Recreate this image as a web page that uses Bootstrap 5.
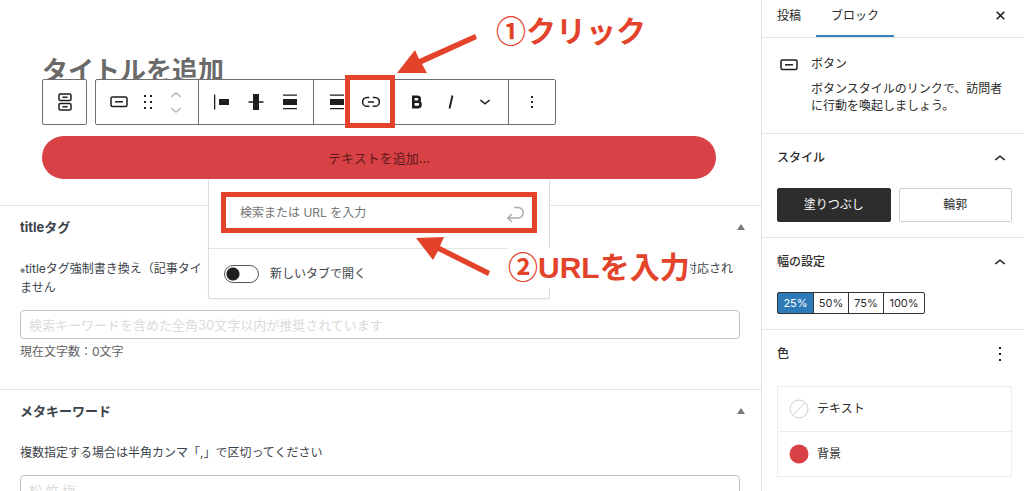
<!DOCTYPE html>
<html lang="ja">
<head>
<meta charset="utf-8">
<meta name="viewport" content="width=device-width, initial-scale=1">
<title>ボタンブロックの編集</title>
<link href="https://cdn.jsdelivr.net/npm/bootstrap@5.3.0/dist/css/bootstrap.min.css" rel="stylesheet">
<style>
  :root { --ink: #1e1e1e; --mark: #e4432b; --brand: #d84145; --line: #e4e4e4; }
  body { font-family: Inter, "Noto Sans CJK JP", sans-serif; font-size: 12px; line-height: 18px; color: #3c434a; background: #fff; }
  button { color: inherit; }
  .editor-shell { height: 100vh; }
  .settings { width: 263px; border-left: 1px solid var(--line); color: #2c2c2c; }
  .canvas { padding: 55px 45px 26px 42px; }
  .post-title { font-size: 26px; line-height: 32px; font-weight: 700; color: #6a6a6a; margin-bottom: 49px; }
  .block-toolbar { top: 79px; left: 42px; gap: 8px; z-index: 3; color: var(--ink); }
  .tool-box { height: 46px; border: 1px solid #6f6f6f; border-radius: 2px; background: #fff; }
  .tool-parent { width: 45px; }
  .tool-group { padding: 0 6px; }
  .tool-group + .tool-group { border-left: 1px solid #6f6f6f; }
  .tool { width: 34px; height: 44px; padding: 0; border: 0; background: none; display: flex; align-items: center; justify-content: center; }
  .tool-drag { width: 24px; }
  .tool-move { width: 32px; }
  .tool svg, .settings svg { display: block; }
  .tool-marked { position: relative; z-index: 2; }
  .tool-marked::after { content: ""; position: absolute; inset: -5px -7px -4px -9px; border: 5px solid var(--mark); }
  .cta { height: 43px; border: 0; border-radius: 22px; background: var(--brand); color: #5d1a1c; font-size: 13px; }
  .link-popover { top: 179px; left: 208px; width: 342px; z-index: 2; background: #fff; border: 1px solid #dcdcdc; border-top: 0; border-radius: 2px; box-shadow: 0 1px 2px #0000000d; }
  .link-search { margin: 13px 12px 15px; height: 41px; border: 5px solid var(--mark); }
  .link-search input { border: 0; outline: 0; padding: 0 14px; color: #555; background: none; }
  .link-search input::placeholder { color: #757575; opacity: 1; }
  .link-option { height: 50px; padding: 0 15px; gap: 11px; border-top: 1px solid var(--line); }
  .switch { appearance: none; width: 35px; height: 18px; margin: 0; border: 1px solid #555; border-radius: 9px; background: radial-gradient(circle at 8px 8px, #1e1e1e 6px, transparent 7px); }
  .meta-panel { border-top: 1px solid var(--line); padding: 0 21px 0 20px; }
  .meta-head { height: 42px; }
  .meta-head h2 { font-size: 13px; line-height: 18px; font-weight: 700; margin: 0; }
  .meta-note { margin: 12px 0 13px; }
  .note-line { padding-right: 7px; }
  .note-mark { font-size: 8px; }
  .meta-toggle { border: 0; background: none; padding: 0; margin-right: -5px; }
  .meta-input { display: block; width: 100%; height: 29px; border: 1px solid #bfc1c4; border-radius: 4px; padding: 0 8px; font-size: 13px; }
  .meta-input::placeholder { color: #dadada; opacity: 1; }
  .meta-count { margin: 4px 0 28px; color: #606060; }
  .callout { font-family: "Liberation Sans", "Noto Sans CJK JP", sans-serif; font-size: 30px; line-height: 40px; font-weight: 700; color: var(--mark); background: #fff; z-index: 4; white-space: nowrap; }
  .callout-click { top: 12px; left: 496px; }
  .callout-url { top: 248px; left: 508px; }
  .pointer { z-index: 5; }
  .pointer-click { top: 30px; left: 390px; }
  .pointer-url { top: 230px; left: 410px; }
  .side-tabs { height: 38px; border-bottom: 1px solid var(--line); }
  .side-tab { border: 0; background: none; height: 37px; padding: 0 15px 4px; border-bottom: 2px solid transparent; }
  .side-tab.active { border-color: #3a80b5; }
  .side-close { border: 0; background: none; padding: 0 19px 7px 0; }
  .side-panel { padding: 15px 12px 15px 15px; border-bottom: 1px solid var(--line); }
  .side-head { height: 18px; margin-bottom: 21px; padding-right: 6px; }
  .side-head h3 { font-size: 12px; line-height: 18px; margin: 0; }
  .icon-button { border: 0; background: none; padding: 0; }
  .block-card { gap: 13px; padding: 17px 15px 19px 18px; border-bottom: 1px solid var(--line); }
  .block-card p { margin: 7px 0 0; line-height: 17px; }
  .style-choice { height: 34px; padding: 0; border: 1px solid #cfcfcf; border-radius: 2px; background: #fff; }
  .style-choice.active { background: #2d2d2d; border-color: #2d2d2d; color: #fff; }
  .width-choice { height: 22px; width: 36px; padding: 0; font-size: 11px; line-height: 16px; border: 1px solid #333; margin-left: -1px; background: #fff; }
  .width-choice:first-child { margin-left: 0; width: 37px; border-radius: 2px 0 0 2px; background: #2c7ab8; color: #fff; }
  .width-choice:last-child { width: 42px; border-radius: 0 2px 2px 0; }
  .color-list { border: 1px solid #ececec; margin-top: 23px; }
  .color-row { height: 44px; padding: 0 11px; gap: 8px; border: 0; background: none; width: 100%; }
  .color-row + .color-row { height: 45px; border-top: 1px solid #ececec; }
</style>
</head>
<body>
<div class="editor-shell d-flex overflow-hidden">
  <main class="flex-grow-1 position-relative overflow-hidden">
    <section class="canvas">
      <h1 class="post-title">タイトルを追加</h1>
      <button class="cta w-100" type="button">テキストを追加...</button>
    </section>

    <div class="block-toolbar position-absolute d-flex" role="toolbar" aria-label="ブロックツール">
      <div class="tool-box tool-parent d-flex justify-content-center"><button class="tool" type="button" aria-label="ボタングループ"><svg width="16" height="20" viewBox="0 0 16 20" fill="none" stroke="currentColor" stroke-width="1.5"><rect x="2" y="2" width="12" height="6.5" rx="1.3"/><rect x="2" y="11.5" width="12" height="6.5" rx="1.3"/><path d="M5.5 5.2h5M5.5 14.8h5"/></svg></button></div>
      <div class="tool-box d-flex">
        <div class="tool-group d-flex">
          <button class="tool" type="button" aria-label="ボタン"><svg width="18" height="12" fill="none" stroke="currentColor" stroke-width="1.5"><rect x="1" y="1" width="16" height="9.5" rx="1.5"/><path d="M5 5.8h8"/></svg></button>
          <button class="tool tool-drag" type="button" aria-label="ドラッグ"><svg width="10" height="16" fill="currentColor"><path d="M1 1h2v2H1zM7 1h2v2H7zM1 7h2v2H1zM7 7h2v2H7zM1 13h2v2H1zM7 13h2v2H7z"/></svg></button>
          <button class="tool tool-move" type="button" aria-label="移動"><svg width="12" height="22" fill="none" stroke="#b5b5b5" stroke-width="1.4"><path d="M1 6l5-4 5 4M1 17l5 4 5-4"/></svg></button>
        </div>
        <div class="tool-group d-flex">
          <button class="tool" type="button" aria-label="左寄せ"><svg width="16" height="16" fill="currentColor"><path d="M0 .5h1.3v15H0zM5 5h10v6H5z"/></svg></button>
          <button class="tool" type="button" aria-label="中央寄せ"><svg width="16" height="16" fill="currentColor"><path d="M5 0h6v16H5zM.5 7.3h15v1.4H.5z"/></svg></button>
          <button class="tool" type="button" aria-label="幅を揃える"><svg width="14" height="16" fill="currentColor"><path d="M0 .5h14v1.3H0zM0 5h14v6H0zM0 14h14v1.3H0z"/></svg></button>
        </div>
        <div class="tool-group d-flex">
          <button class="tool" type="button" aria-label="配置"><svg width="14" height="16" fill="currentColor"><path d="M0 .5h14v1.3H0zM0 5h14v6H0zM0 14h14v1.3H0z"/></svg></button>
          <button class="tool tool-marked me-2" type="button" aria-label="リンク"><svg width="18" height="12" fill="none" stroke="currentColor" stroke-width="1.5"><path d="M7.3 1.5H5a4.4 4.4 0 0 0 0 8.8h2.3M10.7 1.5H13a4.4 4.4 0 0 1 0 8.8h-2.3M6 5.9h6"/></svg></button>
          <button class="tool ms-1" type="button" aria-label="太字"><svg width="12" height="14" fill="none" stroke="currentColor" stroke-width="2.6"><path d="M2.3 1.8h4a2.4 2.4 0 0 1 0 4.9h-4zM2.3 6.7h4.5a2.7 2.7 0 0 1 0 5.4H2.3z"/></svg></button>
          <button class="tool" type="button" aria-label="斜体"><svg width="8" height="14" fill="none" stroke="currentColor" stroke-width="1.9"><path d="M5.5 .5L2.5 13.5"/></svg></button>
          <button class="tool" type="button" aria-label="その他"><svg width="12" height="8" fill="none" stroke="currentColor" stroke-width="1.6"><path d="M1.3 2L6 5.8 10.7 2"/></svg></button>
        </div>
        <div class="tool-group d-flex">
          <button class="tool" type="button" aria-label="オプション"><svg width="4" height="16" fill="currentColor"><path d="M1 2h2v2H1zM1 7h2v2H1zM1 12h2v2H1z"/></svg></button>
        </div>
      </div>
    </div>

    <div class="link-popover position-absolute">
      <div class="link-search d-flex align-items-center">
        <input class="flex-grow-1" type="text" aria-label="URL" placeholder="検索または URL を入力">
        <button class="icon-button me-2 pt-1" type="button" aria-label="送信"><svg class="d-block" width="18" height="17" fill="none" stroke="#aaa" stroke-width="1.4"><path d="M8 1.500h4a5 5 0 0 1 0 10.500H2M6 8l-4.300 4L6 16"/></svg></button>
      </div>
      <div class="link-option d-flex align-items-center">
        <input class="switch" type="checkbox" role="switch" id="newTab">
        <label for="newTab">新しいタブで開く</label>
      </div>
    </div>

    <section class="meta-panel">
      <div class="meta-head d-flex align-items-center justify-content-between">
        <h2>titleタグ</h2>
        <button class="meta-toggle" type="button" aria-label="閉じる"><svg class="d-block" width="8" height="6" fill="#777"><path d="M4 0l4 6H0z"/></svg></button>
      </div>
      <div class="meta-note">
        <div class="note-line d-flex justify-content-between"><span><span class="note-mark">※</span>titleタグ強制書き換え（記事タイ</span><span>対応され</span></div>
        <div>ません</div>
      </div>
      <input class="meta-input" type="text" aria-label="titleタグ" placeholder="検索キーワードを含めた全角30文字以内が推奨されています">
      <p class="meta-count">現在文字数：0文字</p>
    </section>
    <section class="meta-panel">
      <div class="meta-head d-flex align-items-center justify-content-between">
        <h2>メタキーワード</h2>
        <button class="meta-toggle" type="button" aria-label="閉じる"><svg class="d-block" width="8" height="6" fill="#777"><path d="M4 0l4 6H0z"/></svg></button>
      </div>
      <p class="meta-note">複数指定する場合は半角カンマ「,」で区切ってください</p>
      <input class="meta-input" type="text" aria-label="メタキーワード" placeholder="松 竹 梅">
    </section>

    <div class="callout callout-click position-absolute">①クリック</div>
    <svg class="pointer pointer-click position-absolute" width="92" height="50" fill="#e4432b"><path d="M7 43L25 20l4 9L85 4l2 5L32 34l5 9z"/></svg>
    <div class="callout callout-url position-absolute">②URLを入力</div>
    <svg class="pointer pointer-url position-absolute" width="84" height="52" fill="#e4432b"><path d="M6 8l28-1-4 9 50 25-2 5-50-25-5 9z"/></svg>
  </main>

  <aside class="settings flex-shrink-0">
    <div class="side-tabs d-flex">
      <button class="side-tab" type="button">投稿</button>
      <button class="side-tab active" type="button">ブロック</button>
      <button class="side-close ms-auto" type="button" aria-label="閉じる"><svg width="9" height="9" stroke="#1e1e1e" stroke-width="1.6"><path d="M.7.7l7.600 7.600M8.300.7L.7 8.300"/></svg></button>
    </div>
    <div class="block-card d-flex">
      <svg class="flex-shrink-0 mt-1" width="18" height="12" fill="none" stroke="#1e1e1e" stroke-width="1.5"><rect x="1" y="1" width="16" height="9.5" rx="1.5"/><path d="M5 5.800h8"/></svg>
      <div><div>ボタン</div><p>ボタンスタイルのリンクで、訪問者に行動を喚起しましょう。</p></div>
    </div>
    <section class="side-panel">
      <div class="side-head d-flex align-items-center justify-content-between"><h3>スタイル</h3><button class="icon-button" type="button" aria-label="スタイルを閉じる"><svg width="12" height="8" fill="none" stroke="#1e1e1e" stroke-width="1.600"><path d="M1.300 6L6 2.200 10.700 6"/></svg></button></div>
      <div class="d-flex gap-2">
        <button class="style-choice active flex-fill w-50" type="button">塗りつぶし</button>
        <button class="style-choice flex-fill w-50" type="button">輪郭</button>
      </div>
    </section>
    <section class="side-panel">
      <div class="side-head d-flex align-items-center justify-content-between"><h3>幅の設定</h3><button class="icon-button" type="button" aria-label="幅の設定を閉じる"><svg width="12" height="8" fill="none" stroke="#1e1e1e" stroke-width="1.600"><path d="M1.300 6L6 2.200 10.700 6"/></svg></button></div>
      <div class="d-flex" role="group" aria-label="幅">
        <button class="width-choice" type="button">25%</button><button class="width-choice" type="button">50%</button><button class="width-choice" type="button">75%</button><button class="width-choice" type="button">100%</button>
      </div>
    </section>
    <section class="side-panel">
      <div class="side-head d-flex align-items-center justify-content-between"><h3>色</h3><button class="icon-button pe-1" type="button" aria-label="色のオプション"><svg width="4" height="16" fill="#1e1e1e"><path d="M1 1h2v2H1zM1 7h2v2H1zM1 13h2v2H1z"/></svg></button></div>
      <div class="color-list">
        <button class="color-row d-flex align-items-center" type="button"><svg width="20" height="20" fill="#fff" stroke="#cfcfcf"><circle cx="10" cy="10" r="9"/><path d="M3.600 16.400L16.400 3.600"/></svg>テキスト</button>
        <button class="color-row d-flex align-items-center" type="button"><svg width="20" height="20"><circle cx="10" cy="10" r="9.500" fill="#d84145"/></svg>背景</button>
      </div>
    </section>
  </aside>
</div>
<script src="https://cdn.jsdelivr.net/npm/bootstrap@5.3.0/dist/js/bootstrap.bundle.min.js"></script>
</body>
</html>
